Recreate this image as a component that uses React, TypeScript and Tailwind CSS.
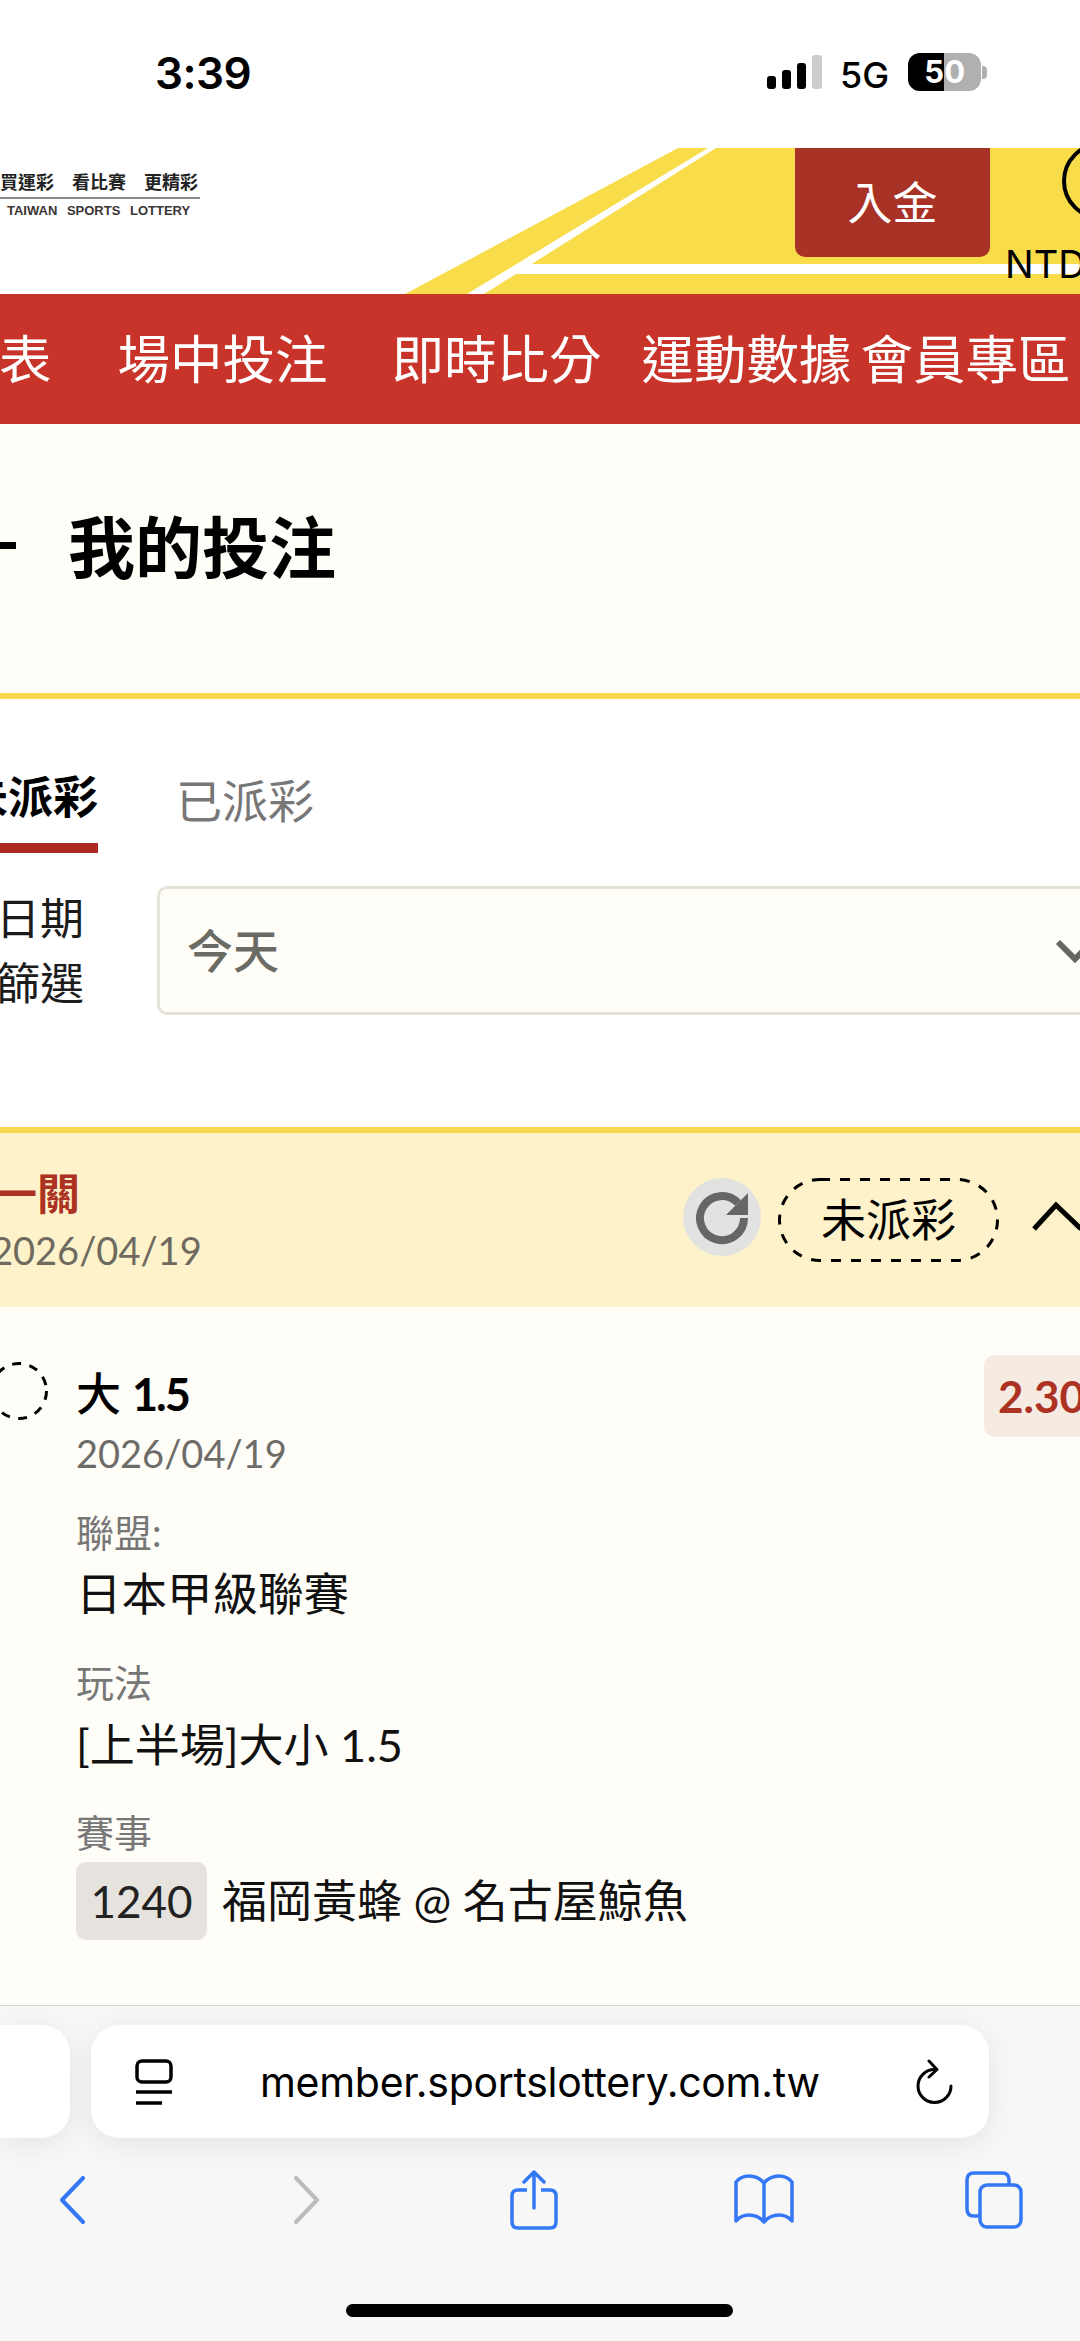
const BLUE = "#3478f6";

function StatusBar() {
  return (
    <div className="flex h-[148px] items-start bg-white font-['Inter','Liberation_Sans',sans-serif]">
      <div className="ml-[155px] mt-[48px] w-[97px] shrink-0 text-[44px] leading-[50px] font-semibold tracking-[-0.5px] whitespace-nowrap text-black">3:39</div>
      <div className="ml-[515px] mt-[55px] flex h-[34px] items-end gap-[6px]">
        <div className="h-[13px] w-[9px] rounded-[3px] bg-black" />
        <div className="h-[19px] w-[9px] rounded-[3px] bg-black" />
        <div className="h-[26px] w-[9px] rounded-[3px] bg-black" />
        <div className="h-[34px] w-[10px] rounded-[3px] bg-[#cccccc]" />
      </div>
      <div className="ml-[18px] mt-[55px] text-[36px] leading-[40px] font-medium text-black">5G</div>
      <div className="ml-[19px] mt-[53px] flex items-center">
        <div className="relative flex h-[38px] w-[73px] items-center justify-center overflow-hidden rounded-[12px] bg-[#b0b0b0]">
          <div className="absolute bottom-0 left-0 top-0 w-[36px] bg-black" />
          <span className="relative text-[31px] leading-[38px] font-bold text-white">50</span>
        </div>
        <div className="ml-[1px] h-[13px] w-[5px] rounded-r-[4px] bg-[#b0b0b0]" />
      </div>
    </div>
  );
}

function Header() {
  return (
    <div className="relative flex h-[146px] overflow-hidden bg-white">
      <svg className="absolute inset-0" width="1080" height="146" viewBox="0 0 1080 146">
        <polygon points="678,0 1080,0 1080,146 405,146" fill="#f9dc4a" />
        <polygon points="708,0 716,0 484,146 467,146" fill="#ffffff" />
        <polygon points="530,116 1080,116 1080,126 515,126" fill="#ffffff" />
        <circle cx="1101" cy="33" r="37" fill="none" stroke="#000000" strokeWidth="4" />
      </svg>
      <div className="relative w-[795px] shrink-0 pt-[23px] font-['Liberation_Sans','Noto_Sans_CJK_TC',sans-serif]">
        <div className="flex w-[198px] justify-between text-[18px] leading-[24px] font-bold text-[#222222]">
          <span>買運彩</span>
          <span>看比賽</span>
          <span>更精彩</span>
        </div>
        <div className="mt-[2px] h-[2px] w-[200px] bg-[#8f8a85]" />
        <div className="ml-[7px] mt-[4px] text-[13px] leading-[16px] font-bold whitespace-nowrap text-[#3a3535] [word-spacing:6px]">TAIWAN SPORTS LOTTERY</div>
      </div>
      <div className="relative flex h-[109px] w-[195px] shrink-0 items-center justify-center rounded-b-[10px] bg-[#a93226] text-[45px] leading-[50px] text-white">入金</div>
      <div className="relative ml-[15px] mt-[94px] shrink-0 font-['Inter','Liberation_Sans',sans-serif] text-[38px] leading-[44px] text-black">NTD</div>
    </div>
  );
}

function Nav() {
  return (
    <div className="flex h-[130px] items-center whitespace-nowrap bg-[#c9342a] text-[52.5px] leading-[60px] text-white">
      <span className="-ml-[1px]">表</span>
      <span className="ml-[66px]">場中投注</span>
      <span className="ml-[64px]">即時比分</span>
      <span className="ml-[40px]">運動數據</span>
      <span className="ml-[9px]">會員專區</span>
    </div>
  );
}

function Title() {
  return (
    <div className="flex h-[269px] items-start bg-[#fffdf7] pt-[90px]">
      <div className="mt-[28px] h-[7px] w-[16px] shrink-0 bg-black" />
      <h1 className="ml-[52px] text-[67px] leading-[66px] font-bold text-black">我的投注</h1>
    </div>
  );
}

function Filters() {
  return (
    <div className="h-[434px] border-t-[6px] border-[#f9d74f] bg-white">
      <div className="flex h-[148px] items-start whitespace-nowrap text-[45px] leading-[60px]">
        <div className="-ml-[37px] mt-[68px] flex h-[86px] w-[135px] flex-col">
          <span className="font-bold text-black">未派彩</span>
          <div className="mt-[16px] h-[10px] w-full bg-[#ac2a22]" />
        </div>
        <span className="ml-[78px] mt-[72px] text-[46px] text-[#777777]">已派彩</span>
      </div>
      <div className="mt-[39px] flex items-start">
        <div className="-ml-[4px] w-[88px] shrink-0 text-[44px] leading-[65px] text-[#1c1c1c]">
          <div>日期</div>
          <div>篩選</div>
        </div>
        <div className="ml-[73px] flex h-[129px] w-[960px] shrink-0 items-center rounded-[10px] border-[3px] border-[#e5e3d8] bg-[#fffdf7] pl-[27px]">
          <span className="text-[46px] leading-[50px] font-medium text-[#6b6b66]">今天</span>
          <svg className="ml-[776px]" width="40" height="24" viewBox="0 0 40 24">
            <path d="M3 3 L20 20 L37 3" fill="none" stroke="#666662" strokeWidth="6" />
          </svg>
        </div>
      </div>
    </div>
  );
}

function CardHeader() {
  return (
    <div className="flex h-[180px] items-start border-t-[6px] border-[#f9d74f] bg-[#fdf2c9]">
      <div className="-ml-[9px] w-[209px] shrink-0 whitespace-nowrap pt-[36px]">
        <div className="w-[89px] text-right text-[43px] leading-[50px] font-bold text-[#ac3324]">一關</div>
        <div className="mt-[8px] text-[38px] leading-[46px] text-[#6e6a60]">2026/04/19</div>
      </div>
      <div className="ml-[483px] mt-[45px] flex h-[78px] w-[78px] shrink-0 items-center justify-center rounded-full bg-[#e2e2e0]">
        <svg width="78" height="78" viewBox="0 0 78 78">
          <path d="M55 25 A22 22 0 1 0 61 40" fill="none" stroke="#666666" strokeWidth="8" />
          <polygon points="65,15 65,37 43,37" fill="#666666" />
        </svg>
      </div>
      <div className="relative ml-[17px] mt-[45px] flex h-[84px] w-[221px] shrink-0 items-center justify-center text-[45px] leading-[50px] text-black">
        <svg className="absolute inset-0" width="221" height="84" viewBox="0 0 221 84">
          <rect x="1.5" y="1.5" width="218" height="81" rx="40.5" fill="none" stroke="#000000" strokeWidth="3" strokeDasharray="10 10" />
        </svg>
        <span className="relative">未派彩</span>
      </div>
      <svg className="ml-[32px] mt-[68px] shrink-0" width="52" height="32" viewBox="0 0 52 32">
        <path d="M3 28 L25 4 L50 28" fill="none" stroke="#000000" strokeWidth="5" />
      </svg>
    </div>
  );
}

function CardBody() {
  return (
    <div className="flex flex-1 flex-col bg-[#fffdf7] pt-[48px] whitespace-nowrap">
      <div className="flex items-start">
        <svg className="-ml-[10px] mt-[7px] shrink-0" width="58" height="58" viewBox="0 0 58 58">
          <circle cx="29" cy="29" r="27.5" fill="none" stroke="#000000" strokeWidth="3" strokeDasharray="9 8.5" />
        </svg>
        <div className="ml-[28px] mt-[14px]">
          <div className="flex items-center text-[45px] leading-[50px] text-black">
            <span className="font-medium">大</span>
            <span className="ml-[11px] font-bold tracking-[-2px]">1.5</span>
          </div>
          <div className="mt-[9px] text-[38px] leading-[50px] text-[#6e6c68]">2026/04/19</div>
        </div>
        <div className="-mr-[14px] ml-auto flex h-[82px] w-[110px] shrink-0 items-center rounded-[10px] bg-[#f5ebe3] pl-[14px] text-[44px] leading-[50px] font-bold text-[#ac3324]">2.30</div>
      </div>
      <div className="pl-[76px]">
        <div className="mt-[29px] text-[38px] leading-[50px] text-[#777777]">聯盟:</div>
        <div className="mt-[12px] text-[45.5px] leading-[50px] text-[#111111]">日本甲級聯賽</div>
        <div className="mt-[38px] text-[38px] leading-[50px] text-[#777777]">玩法</div>
        <div className="mt-[13px] text-[45px] leading-[50px] text-[#111111]">[上半場]大小 1.5</div>
        <div className="mt-[37px] text-[38px] leading-[50px] text-[#777777]">賽事</div>
        <div className="mt-[5px] flex items-center">
          <div className="flex h-[78px] w-[131px] items-center justify-center rounded-[10px] bg-[#e6e3de] text-[44px] leading-[50px] text-[#222222]">1240</div>
          <div className="ml-[15px] text-[45px] leading-[50px] text-[#111111]">福岡黃蜂 @ 名古屋鯨魚</div>
        </div>
      </div>
    </div>
  );
}

function Safari() {
  return (
    <div className="h-[336px] border-t-[1px] border-[#d4d4d2] bg-[#f7f7f7]">
      <div className="mt-[19px] flex h-[113px] items-stretch gap-[21px]">
        <div className="w-[70px] rounded-r-[28px] bg-white shadow-[0_6px_30px_rgba(0,0,0,0.08)]" />
        <div className="flex w-[898px] items-center rounded-[28px] bg-white shadow-[0_6px_30px_rgba(0,0,0,0.08)]">
          <svg className="ml-[44px] shrink-0" width="38" height="46" viewBox="0 0 38 46">
            <rect x="2" y="2" width="34" height="21" rx="5" fill="none" stroke="#000000" strokeWidth="3.5" />
            <path d="M1 33 H37" stroke="#000000" strokeWidth="3.5" />
            <path d="M1 44 H27" stroke="#000000" strokeWidth="3.5" />
          </svg>
          <div className="ml-[87px] w-[561px] shrink-0 font-['Inter','Liberation_Sans',sans-serif] text-[41px] leading-[46px] tracking-[-0.3px] whitespace-nowrap text-black">member.sportslottery.com.tw</div>
          <svg className="ml-[95px] shrink-0" width="38" height="46" viewBox="0 0 38 46">
            <path d="M35 27 A16.5 16.5 0 1 1 18.5 10.5" fill="none" stroke="#000000" strokeWidth="3" strokeLinecap="round" />
            <path d="M13 2 L21 10.5 L13 18" fill="none" stroke="#000000" strokeWidth="3" strokeLinecap="round" strokeLinejoin="round" />
          </svg>
        </div>
      </div>
      <div className="mt-[32px] flex h-[60px] items-center">
        <svg className="ml-[59px] shrink-0" width="26" height="48" viewBox="0 0 26 48">
          <path d="M24 2 L3 24 L24 46" fill="none" stroke={BLUE} strokeWidth="4" strokeLinecap="round" strokeLinejoin="round" />
        </svg>
        <svg className="ml-[209px] shrink-0" width="26" height="48" viewBox="0 0 26 48">
          <path d="M2 2 L23 24 L2 46" fill="none" stroke="#bcbcbc" strokeWidth="4" strokeLinecap="round" strokeLinejoin="round" />
        </svg>
        <svg className="ml-[190px] shrink-0" width="48" height="60" viewBox="0 0 48 60">
          <path d="M17 20 H8 Q2 20 2 26 V52 Q2 58 8 58 H40 Q46 58 46 52 V26 Q46 20 40 20 H31" fill="none" stroke={BLUE} strokeWidth="3.5" />
          <path d="M24 38 V2 M14 12 L24 2 L34 12" fill="none" stroke={BLUE} strokeWidth="3.5" strokeLinecap="round" strokeLinejoin="round" />
        </svg>
        <svg className="ml-[175px] shrink-0" width="62" height="52" viewBox="0 0 62 52">
          <path d="M31 9 Q25 2 16 2 Q8 2 3 8 V47 Q8 41 16 41 Q25 41 31 48 Q37 41 46 41 Q54 41 59 47 V8 Q54 2 46 2 Q37 2 31 9 Z M31 9 V48" fill="none" stroke={BLUE} strokeWidth="3.5" strokeLinejoin="round" />
        </svg>
        <svg className="ml-[170px] shrink-0" width="58" height="58" viewBox="0 0 58 58">
          <path d="M14 45 H9 Q2 45 2 38 V9 Q2 2 9 2 H37 Q44 2 44 9 V13" fill="none" stroke={BLUE} strokeWidth="3.5" />
          <rect x="15" y="14" width="41" height="42" rx="7" fill="none" stroke={BLUE} strokeWidth="3.5" />
        </svg>
      </div>
      <div className="ml-[346px] mt-[74px] h-[13px] w-[387px] rounded-full bg-black" />
    </div>
  );
}

export default function App() {
  return (
    <div className="flex h-[2341px] w-[1080px] flex-col overflow-hidden bg-white font-['Lato','Noto_Sans_CJK_TC',sans-serif]">
      <StatusBar />
      <Header />
      <Nav />
      <Title />
      <Filters />
      <CardHeader />
      <CardBody />
      <Safari />
    </div>
  );
}
